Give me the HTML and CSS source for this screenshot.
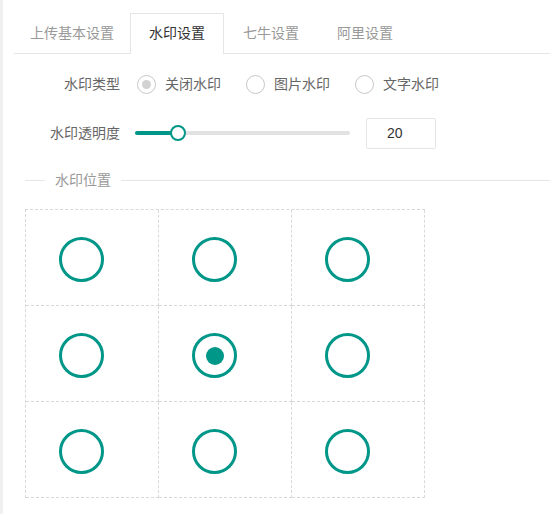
FILE: index.html
```html
<!DOCTYPE html>
<html lang="zh-CN">
<head>
    <meta charset="UTF-8">
    <title>水印设置</title>
    <link rel="stylesheet" href="styles.css">
</head>
<body>
<div class="page">
    <ul class="tabs">
        <li class="tab tab-first">上传基本设置</li>
        <li class="tab active">水印设置</li>
        <li class="tab">七牛设置</li>
        <li class="tab">阿里设置</li>
    </ul>

    <div class="form">
        <div class="row">
            <label class="label">水印类型</label>
            <div class="radios">
                <span class="radio disabled"><i class="radio-icon"></i>关闭水印</span>
                <span class="radio"><i class="radio-icon"></i>图片水印</span>
                <span class="radio"><i class="radio-icon"></i>文字水印</span>
            </div>
        </div>

        <div class="row">
            <label class="label">水印透明度</label>
            <div class="slider">
                <div class="slider-fill" style="width: 20%;"></div>
                <div class="slider-thumb" style="left: 20%;"></div>
            </div>
            <input class="num" type="text" value="20">
        </div>

        <div class="divider"><span>水印位置</span></div>

        <div class="pos-grid">
            <div class="cell"><i class="pos"></i></div>
            <div class="cell"><i class="pos"></i></div>
            <div class="cell"><i class="pos"></i></div>
            <div class="cell"><i class="pos"></i></div>
            <div class="cell"><i class="pos checked"></i></div>
            <div class="cell"><i class="pos"></i></div>
            <div class="cell"><i class="pos"></i></div>
            <div class="cell"><i class="pos"></i></div>
            <div class="cell"><i class="pos"></i></div>
        </div>
    </div>
</div>
</body>
</html>
```

FILE: styles.css
```css
* {
    box-sizing: border-box;
}

body, ul, li {
    margin: 0;
    padding: 0;
    list-style: none;
}

body {
    background: #fff;
    font-family: "Liberation Sans", "Noto Sans CJK SC", sans-serif;
    font-size: 14px;
    color: #666;
}

.page {
    min-height: 100vh;
    border-left: 3px solid #f0f0f0;
    padding: 13px 0 0 11px;
}

/* 选项卡 */
.tabs {
    display: flex;
    border-bottom: 1px solid #e6e6e6;
}

.tab {
    height: 41px;
    line-height: 39px;
    margin-bottom: -1px;
    padding: 0 18px;
    border: 1px solid transparent;
    border-bottom: none;
    color: #999;
    white-space: nowrap;
    cursor: pointer;
}

.tab-first {
    padding: 0 15px;
}

.tab.active {
    background: #fff;
    border-color: #e6e6e6;
    color: #333;
}

/* 表单 */
.form {
    padding-top: 11px;
}

.row {
    display: flex;
    align-items: center;
    height: 38px;
    margin-bottom: 11px;
}

.label {
    width: 106px;
    text-align: right;
    line-height: 20px;
}

.radios {
    display: flex;
    align-items: center;
    margin-left: 17px;
}

.radio {
    display: flex;
    align-items: center;
    margin-right: 25px;
    line-height: 20px;
}

.radio-icon {
    display: flex;
    align-items: center;
    justify-content: center;
    width: 19px;
    height: 19px;
    margin-right: 9px;
    border: 1px solid #c8c8c8;
    border-radius: 50%;
}

.radio.disabled .radio-icon::after {
    content: "";
    width: 9px;
    height: 9px;
    border-radius: 50%;
    background: #d2d2d2;
}

.slider {
    position: relative;
    width: 215px;
    height: 4px;
    margin-left: 15px;
    border-radius: 3px;
    background: #e2e2e2;
}

.slider-fill {
    height: 4px;
    border-radius: 3px;
    background: #009688;
}

.slider-thumb {
    position: absolute;
    top: 50%;
    width: 16px;
    height: 16px;
    margin: -8px 0 0 -8px;
    border: 2px solid #009688;
    border-radius: 50%;
    background: #fff;
}

.num {
    width: 70px;
    height: 31px;
    margin-left: 16px;
    padding: 0 0 0 20px;
    border: 1px solid #e6e6e6;
    border-radius: 2px;
    font-family: "Liberation Sans", sans-serif;
    font-size: 14px;
    color: #333;
    outline: none;
}

/* 分隔线 */
.divider {
    display: flex;
    align-items: center;
    height: 20px;
    margin: 18px 0 19px 11px;
    color: #999;
    line-height: 20px;
}

.divider::before {
    content: "";
    width: 20px;
    border-top: 1px solid #e6e6e6;
}

.divider::after {
    content: "";
    flex: 1;
    border-top: 1px solid #e6e6e6;
}

.divider span {
    padding: 0 10px;
}

/* 水印位置 */
.pos-grid {
    display: grid;
    grid-template-columns: repeat(3, 133px);
    grid-auto-rows: 96px;
    width: 400px;
    margin-left: 11px;
    border-top: 1px dashed #d9d9d9;
    border-left: 1px dashed #d9d9d9;
}

.cell {
    padding: 27px 0 0 33px;
    border-right: 1px dashed #d9d9d9;
    border-bottom: 1px dashed #d9d9d9;
}

.pos {
    display: flex;
    align-items: center;
    justify-content: center;
    width: 45px;
    height: 45px;
    border: 3px solid #009688;
    border-radius: 50%;
    cursor: pointer;
}

.pos.checked::after {
    content: "";
    width: 18px;
    height: 18px;
    border-radius: 50%;
    background: #009688;
}
```
